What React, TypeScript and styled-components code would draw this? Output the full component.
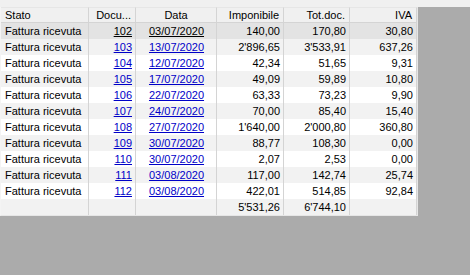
import React from "react";
import styled, { createGlobalStyle } from "styled-components";

const Global = createGlobalStyle`
  html, body { margin: 0; padding: 0; }
  body {
    width: 470px;
    height: 275px;
    overflow: hidden;
    background: #ababab;
    font-family: "Liberation Sans", Arial, sans-serif;
    font-size: 11px;
  }
`;

const Page = styled.div`
  display: flex;
  flex-direction: column;
  width: 470px;
  height: 275px;
`;

const TopStrip = styled.div`
  height: 7px;
  background: #f0f0f0;
  flex: none;
`;

const Area = styled.div`
  flex: 1;
  background: #ababab;
  display: flex;
  align-items: flex-start;
`;

const Grid = styled.div`
  display: grid;
  grid-template-columns: 88px 47px 81px 67px 66px 67px;
  grid-auto-rows: 16px;
  background: #ffffff;
  border-left: 1px solid #f4f4f4;
  border-right: 1px solid #e6e6e6;
  border-bottom: 1px solid #e6e6e6;
  width: 416px;
`;

const HeadCell = styled.div<{ $align: string }>`
  box-sizing: border-box;
  background: #f0f0f0;
  border-right: 1px solid #d4d4d4;
  border-bottom: 1px solid #d4d4d4;
  border-top: 1px solid #e6e6e6;
  display: flex;
  align-items: center;
  justify-content: ${(p) => p.$align};
  padding: 0 4px 0 4px;
  color: #000;
  white-space: nowrap;
  overflow: hidden;
`;

const Cell = styled.div<{ $align: string; $bg: string }>`
  box-sizing: border-box;
  background: ${(p) => p.$bg};
  border-right: 1px solid #d4d4d4;
  display: flex;
  align-items: center;
  justify-content: ${(p) => p.$align};
  padding: 0 3px 0 4px;
  color: #000;
  white-space: nowrap;
  overflow: hidden;
`;

const Link = styled.span<{ $sel: boolean }>`
  color: ${(p) => (p.$sel ? "#000000" : "#0000c8")};
  text-decoration: underline;
`;

type Row = [string, string, string, string, string];

const rows: Row[] = [
  ["102", "03/07/2020", "140,00", "170,80", "30,80"],
  ["103", "13/07/2020", "2'896,65", "3'533,91", "637,26"],
  ["104", "12/07/2020", "42,34", "51,65", "9,31"],
  ["105", "17/07/2020", "49,09", "59,89", "10,80"],
  ["106", "22/07/2020", "63,33", "73,23", "9,90"],
  ["107", "24/07/2020", "70,00", "85,40", "15,40"],
  ["108", "27/07/2020", "1'640,00", "2'000,80", "360,80"],
  ["109", "30/07/2020", "88,77", "108,30", "0,00"],
  ["110", "30/07/2020", "2,07", "2,53", "0,00"],
  ["111", "03/08/2020", "117,00", "142,74", "25,74"],
  ["112", "03/08/2020", "422,01", "514,85", "92,84"],
];

const headers: [string, string][] = [
  ["Stato", "flex-start"],
  ["Docu...", "flex-end"],
  ["Data", "center"],
  ["Imponibile", "flex-end"],
  ["Tot.doc.", "flex-end"],
  ["IVA", "flex-end"],
];

function rowBg(i: number): string {
  if (i === 0) return "#e3e3e3";
  return i % 2 === 1 ? "#f2f2f2" : "#ffffff";
}

export default function App() {
  return (
    <>
      <Global />
      <Page>
        <TopStrip />
        <Area>
          <Grid>
            {headers.map(([h, a]) => (
              <HeadCell key={h} $align={a}>
                {h}
              </HeadCell>
            ))}
            {rows.map((r, i) => {
              const bg = rowBg(i);
              const sel = i === 0;
              return (
                <React.Fragment key={r[0]}>
                  <Cell $align="flex-start" $bg={bg}>Fattura ricevuta</Cell>
                  <Cell $align="flex-end" $bg={bg}>
                    <Link $sel={sel}>{r[0]}</Link>
                  </Cell>
                  <Cell $align="center" $bg={bg}>
                    <Link $sel={sel}>{r[1]}</Link>
                  </Cell>
                  <Cell $align="flex-end" $bg={bg}>{r[2]}</Cell>
                  <Cell $align="flex-end" $bg={bg}>{r[3]}</Cell>
                  <Cell $align="flex-end" $bg={bg}>{r[4]}</Cell>
                </React.Fragment>
              );
            })}
            <Cell $align="flex-start" $bg="#f2f2f2" />
            <Cell $align="flex-end" $bg="#f2f2f2" />
            <Cell $align="center" $bg="#f2f2f2" />
            <Cell $align="flex-end" $bg="#f2f2f2">5'531,26</Cell>
            <Cell $align="flex-end" $bg="#f2f2f2">6'744,10</Cell>
            <Cell $align="flex-end" $bg="#f2f2f2" />
          </Grid>
        </Area>
      </Page>
    </>
  );
}
